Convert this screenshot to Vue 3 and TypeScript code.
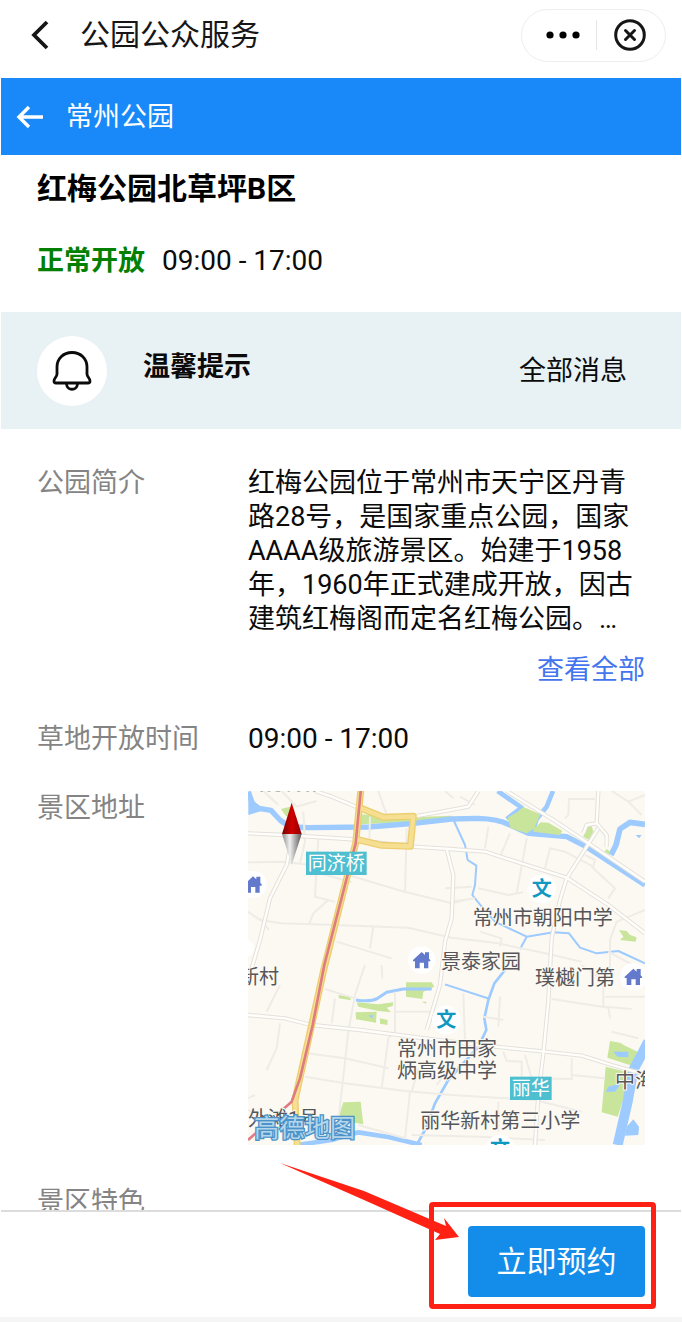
<script setup lang="ts">
interface Label { text: string; x: number; y: number }
interface Point { x: number; y: number }

const intro =
  '红梅公园位于常州市天宁区丹青路28号，是国家重点公园，国家AAAA级旅游景区。始建于1958年，1960年正式建成开放，因古建筑红梅阁而定名红梅公园。…'

const placeLabels: Label[] = [
  { text: '常州市朝阳中学', x: 683, y: 419 },
  { text: '景泰家园', x: 588, y: 552 },
  { text: '新村', x: -18, y: 597 },
  { text: '璞樾门第', x: 870, y: 599 },
  { text: '常州市田家', x: 456, y: 814 },
  { text: '炳高级中学', x: 456, y: 878 },
  { text: '丽华新村第三小学', x: 526, y: 1028 },
  { text: '中海', x: 1110, y: 910 },
  { text: '外滩1号', x: 9, y: 1024 },
]

const homes: Point[] = [
  { x: 24, y: 298 },
  { x: 530, y: 525 },
  { x: 1165, y: 575 },
]

const schools: Point[] = [
  { x: 890, y: 312 },
  { x: 604, y: 705 },
  { x: 765, y: 1092 },
]

const minorRoads: string[] = [
  'M55 18 L100 60 M110 18 L155 65 L215 48',
  'M9 232 L110 230 L180 238 L215 262 L320 292',
  'M175 80 L180 170 L165 235 M220 160 L210 335 L270 350 M250 345 L205 385 L192 418',
  'M310 270 L470 318 L620 355 L660 345 M485 130 L480 320 M400 18 L425 90 M375 95 L373 165',
  'M9 380 L45 405 L110 415 L270 420 L490 428 L620 458 L760 475 L900 505 L1010 530',
  'M45 400 L72 435 M385 425 L375 490 M275 470 L440 520',
  'M645 35 L690 60 M730 125 L720 190 M795 145 L765 215 M845 160 L815 325 M700 310 L790 330 L835 322',
  'M600 310 L680 305 M620 350 L690 340 M600 18 L625 40',
  'M900 250 L915 190 L960 200 L1045 245 L1050 225 L1020 210 M1040 245 L1110 310 L1090 340',
  'M970 90 L972 42 L1050 42 M970 90 L960 100 M1100 18 L1150 50 L1200 30 M1150 50 L1190 90',
  'M1200 375 L1115 410 L1095 465 L1095 550 L1075 595 L1075 665 L1160 672',
  'M705 440 L770 460 L765 485 M1090 500 L1200 560 M1080 635 L1200 635',
  'M920 642 L1090 668 L1095 700 M1010 540 L1080 590',
  'M360 540 L330 630 L310 740 L280 1010 M240 612 L330 640 M270 640 L260 715',
  'M105 600 L65 680 M105 715 L95 790 L65 855 M410 540 L412 580',
  'M450 620 L450 740 L430 760 L410 910 M450 680 L555 680',
  'M185 805 L300 820 L430 850 M180 875 L300 895 L480 918 L620 930 L870 945 L1010 980',
  'M495 920 L480 1060 M520 850 L500 920 M500 1050 L700 1055 L900 1065 M340 1020 L480 1060',
  'M655 625 L660 770 M765 635 L760 725 M715 695 L775 705',
  'M775 800 L785 828 L830 830 L830 875 M840 810 L860 880 L980 882 L980 820',
  'M980 870 L1080 880 M1100 740 L1180 760 M760 950 L760 1040',
  'M575 900 L590 880 M9 940 L30 930 M9 975 L60 995',
]

const majorRoads: string[] = [
  'M9 145 L120 150 L310 162 L500 185 L615 192 L720 200 L860 245 L965 278 L1090 360 L1200 445',
  'M210 18 L260 35 L345 70',
  'M140 160 L125 240 L75 340 L45 465 L20 550',
  'M505 95 L590 80 L670 65 L700 18',
  'M605 192 L625 270 L620 400 L600 470 L585 600 L545 735',
  'M785 18 L930 108 L1030 175 L1200 290',
  'M1060 18 L1055 115 L1085 150 L1085 185 M1055 115 L1025 120 L1015 145',
  'M1060 130 L1025 185 L965 280 L945 345 L920 460 L910 650 L895 805 L880 930 L870 1080',
  'M9 690 L120 700 L200 720 L345 735 L540 760 L700 780 L900 800 L1010 812 L1100 840 L1200 868',
]
</script>

<template>
  <main class="page">
    <header class="app-bar">
      <button class="icon-button back" type="button" aria-label="返回">
        <svg width="20" height="30" viewBox="0 0 20 30" aria-hidden="true">
          <path d="M18 2 L5 15 L18 28" fill="none" stroke="#161616" stroke-width="3.8" />
        </svg>
      </button>
      <span class="app-name">公园公众服务</span>
      <div class="capsule">
        <button class="icon-button more" type="button" aria-label="更多">
          <svg width="36" height="10" viewBox="0 0 36 10" aria-hidden="true">
            <circle cx="5" cy="5" r="3.6" /><circle cx="18" cy="5" r="3.6" /><circle cx="31" cy="5" r="3.6" />
          </svg>
        </button>
        <button class="icon-button close" type="button" aria-label="关闭">
          <svg width="34" height="34" viewBox="0 0 34 34" fill="none" stroke="#161616" aria-hidden="true">
            <circle cx="17" cy="17" r="14.3" stroke-width="3" />
            <path d="M12.5 12.5 L21.5 21.5 M21.5 12.5 L12.5 21.5" stroke-width="3" stroke-linecap="round" />
          </svg>
        </button>
      </div>
    </header>

    <nav class="nav-bar">
      <button class="icon-button" type="button" aria-label="返回上一页">
        <svg width="28" height="24" viewBox="0 0 28 24" fill="none" stroke="#fff" stroke-width="3.4" aria-hidden="true">
          <path d="M27 12 H3 M13 2 L3 12 L13 22" />
        </svg>
      </button>
      <span>常州公园</span>
    </nav>

    <div class="content">
      <section class="summary">
        <h1>红梅公园北草坪B区</h1>
        <p class="status"><strong>正常开放</strong><span class="hours">09:00 - 17:00</span></p>
      </section>

      <section class="notice">
        <span class="bell">
          <svg width="40" height="42" viewBox="0 0 40 42" fill="none" stroke="#0b0b0b" stroke-width="2.8" stroke-linejoin="round" aria-hidden="true">
            <path d="M20 2.5 C11 2.5 5 9 5 17 V24 C5 27 2 28 2 31 Q2 33 4 33 H36 Q38 33 38 31 C38 28 35 27 35 24 V17 C35 9 29 2.5 20 2.5 Z" />
            <path d="M14.5 34 C15 41 25 41 25.5 34" />
          </svg>
        </span>
        <h2>温馨提示</h2>
        <a href="#messages">全部消息</a>
      </section>

      <dl class="details">
        <div class="row">
          <dt>公园简介</dt>
          <dd>
            <p>{{ intro }}</p>
            <a class="view-all" href="#intro">查看全部</a>
          </dd>
        </div>
        <div class="row">
          <dt>草地开放时间</dt>
          <dd class="hours">09:00 - 17:00</dd>
        </div>
        <div class="row">
          <dt>景区地址</dt>
          <dd>
            <svg class="map" viewBox="9 18 1191 1062" role="img" aria-label="地图">
              <defs>
                <linearGradient id="needle-red">
                  <stop offset="0" stop-color="#740000" /><stop offset="0.5" stop-color="#d00000" /><stop offset="1" stop-color="#8e0000" />
                </linearGradient>
                <linearGradient id="needle-grey">
                  <stop offset="0" stop-color="#8c8c8c" /><stop offset="0.4" stop-color="#f0f0f0" /><stop offset="1" stop-color="#555" />
                </linearGradient>
              </defs>
              <rect x="9" y="18" width="1191" height="1062" fill="#fcf9f2" />

              <g fill="#c9e59b">
                <path d="M108 72 L135 65 L140 100 L122 92 Z" />
                <path d="M345 88 L495 97 L620 92 L620 105 L500 112 L345 118 Z" />
                <path d="M280 630 L315 636 L318 646 L282 640 Z M335 652 L400 658 L445 652 L443 663 L425 668 L438 682 L400 678 L340 665 Z" />
                <path d="M332 682 L395 680 L393 713 L333 703 Z M405 700 L428 705 L427 720 L405 716 Z" />
                <path d="M483 592 L560 592 L568 605 L535 620 L532 642 L483 635 Z M530 650 L545 650 L542 656 Z" />
                <path d="M295 952 L347 950 L355 1018 L300 1008 L280 995 Z" />
                <path d="M1122 435 L1145 438 L1155 450 L1175 457 L1172 470 L1125 465 L1135 455 Z" />
                <path d="M1095 768 L1125 773 L1140 782 L1178 800 L1170 845 L1087 818 Z" />
                <path d="M1082 845 L1160 865 L1118 995 L1070 982 Z" />
              </g>

              <g fill="none" stroke="#9dcaff" stroke-linejoin="round">
                <path stroke-width="16" d="M10 20 L22 55 L42 70 L78 76 L105 105 Q130 128 190 128 L370 126 L500 116 L620 102 L700 100 Q760 102 790 118 L850 145 L965 155 L1025 186 L1200 300" />
                <path stroke-width="14" d="M758 18 L830 68 L785 102 M924 18 L905 65 L875 102 L862 142" />
                <path stroke-width="17" d="M1200 118 L1155 112 L1125 132 L1113 180 L1098 210" />
                <path stroke-width="6" d="M627 108 L660 180 L668 225 L694 242 L690 300 L682 330 L710 365 L750 410 L845 455 L925 442 L972 445 L1005 488 L1055 505 L1120 498 L1200 535 M845 455 L825 493" />
                <path stroke-width="6" d="M600 598 L735 642" />
                <path stroke-width="9" d="M333 645 Q375 652 398 640 L425 622 L475 612 L560 612" />
                <path stroke-width="8" d="M780 555 L748 595 L730 645 L718 700 L724 735 L700 785 L610 885 L570 955 L540 1035 L515 1080" />
                <path stroke-width="30" d="M1210 770 L1165 855 L1148 950 L1118 1080" />
                <path stroke-width="14" d="M155 1080 L260 1065 L340 1042 L430 1056 L530 1080" />
              </g>
              <path fill="#9dcaff" d="M10 18 L35 60 L60 75 L10 90 Z M1105 800 L1150 800 L1150 817 L1118 815 Z M1082 920 L1090 905 L1128 895 L1110 920 Z M1145 1025 L1165 1003 L1182 1025 L1180 1050 L1140 1052 Z M370 692 L385 690 L382 700 Z M1172 150 L1190 150 L1182 160 Z" />
              <g fill="#c9e59b">
                <path d="M788 98 L818 80 L835 66 L886 88 L868 130 L845 145 L797 130 Z" />
                <path d="M865 132 L888 112 L910 113 L952 137 L945 150 L865 140 Z" />
                <path d="M1025 125 L1040 122 L1045 140 L1032 165 L1015 155 Z M1078 200 L1085 192 L1096 200 L1092 208 Z" />
              </g>

              <g fill="none" stroke="#efece7" stroke-width="6">
                <path v-for="d in minorRoads" :key="d" :d="d" />
              </g>
              <g fill="none" stroke="#e4e1dc" stroke-width="13" stroke-linejoin="round">
                <path v-for="d in majorRoads" :key="d" :d="d" />
              </g>
              <g fill="none" stroke="#fffefb" stroke-width="7" stroke-linejoin="round">
                <path v-for="d in majorRoads" :key="d" :d="d" />
              </g>

              <g fill="none" stroke-linejoin="round">
                <g stroke="#ecce70" stroke-width="21">
                  <path d="M345 68 L415 97 L505 94 L496 184 L410 181 L335 163" />
                  <path d="M348 10 L332 175 L300 300 L235 560 L200 720 L150 945 L157 1085" />
                </g>
                <g stroke="#f6df92" stroke-width="13">
                  <path d="M345 68 L415 97 L505 94 L496 184 L410 181 L335 163" />
                  <path d="M348 10 L332 175 L300 300 L235 560 L200 720 L150 945 L157 1085" />
                </g>
                <path stroke="#df7c81" stroke-width="8" d="M348 10 L332 175 L300 300 L238 540 L203 720 L165 880 L140 950 L9 1065" />
              </g>

              <path d="M46 18 h8 M68 18 h8 M92 18 h14 M128 18 h6 M156 18 h10 M184 18 h8 M204 18 h8" stroke="#a5a4a2" stroke-width="5" />

              <g v-for="home in homes" :key="home.x" :transform="`translate(${home.x} ${home.y})`">
                <circle r="41" fill="#fff" />
                <path fill="#6379cc" d="M-26 0 L0 -24 L10 -15 V-23 H22 V-4 L26 0 V4 H20 V25 H7 V8 H-6 V25 H-20 V4 H-26 Z" />
              </g>
              <circle cx="0" cy="490" r="27" fill="#fff" />
              <g v-for="school in schools" :key="school.x" :transform="`translate(${school.x} ${school.y})`">
                <circle r="43" fill="#fff" />
                <text class="school" y="22" text-anchor="middle">文</text>
              </g>

              <text v-for="label in placeLabels" :key="label.text" class="place" :x="label.x" :y="label.y">{{ label.text }}</text>

              <g class="station">
                <rect x="183" y="200" width="182" height="70" />
                <text x="274" y="255" text-anchor="middle">同济桥</text>
                <rect x="795" y="875" width="125" height="70" />
                <text x="857" y="930" text-anchor="middle">丽华</text>
              </g>

              <path d="M140 53 L170 147 H111 Z" fill="url(#needle-red)" />
              <path d="M111 147 H170 L140 240 Z" fill="url(#needle-grey)" />
              <text class="provider" x="27" y="1057">高德地图</text>
            </svg>
          </dd>
        </div>
        <div class="row">
          <dt>景区特色</dt>
          <dd></dd>
        </div>
      </dl>
    </div>

    <footer class="actions">
      <div class="reserve">
        <button type="button">立即预约</button>
        <span class="frame"></span>
        <svg class="pointer" width="180" height="80" viewBox="0 0 180 80" aria-hidden="true">
          <path d="M0 0 L84 28 L166 63 L164 55 L179 74 L155 77 L160 71 L84 37 Z" fill="#ff2114" />
        </svg>
      </div>
    </footer>
  </main>
</template>

<style>
body {
  margin: 0;
  background: #fff;
}
</style>

<style scoped>
.page {
  box-sizing: border-box;
  display: flex;
  flex-direction: column;
  height: 100vh;
  padding: 0 1px;
  border-bottom: 5px solid #f5f5f5;
  color: #0b0b0b;
  background: #fff;
  font: 27px/34px Roboto, "Noto Sans CJK SC", sans-serif;
}

h1, h2, p, dl, dd {
  margin: 0;
}

a {
  color: inherit;
  text-decoration: none;
}

button {
  padding: 0;
  border: 0;
  font: inherit;
}

.icon-button {
  display: flex;
  align-items: center;
  justify-content: center;
  background: none;
}

.app-bar {
  display: flex;
  align-items: center;
  flex: none;
  box-sizing: border-box;
  height: 78px;
  padding: 0 15px 8px 28px;
  color: #161616;
}

.app-name {
  flex: 1;
  padding-left: 31px;
  font-size: 30px;
}

.capsule {
  display: flex;
  align-items: center;
  box-sizing: border-box;
  width: 145px;
  height: 53px;
  border: 1px solid #ededed;
  border-radius: 27px;
}

.capsule .icon-button {
  flex: 1;
  height: 30px;
}

.capsule .more {
  padding-left: 8px;
  border-right: 1px solid #e6e6e6;
}

.capsule .close {
  padding-right: 2px;
}

.nav-bar {
  display: flex;
  align-items: center;
  flex: none;
  gap: 22px;
  height: 77px;
  padding-left: 15px;
  color: #fff;
  background: #1989fa;
}

.content {
  flex: 1;
  min-height: 0;
  overflow-y: auto;
  scrollbar-width: none;
}

.summary {
  padding: 12px 36px 34px;
}

h1 {
  margin-bottom: 33px;
  color: #000;
  font-size: 30px;
  line-height: 44px;
}

.status {
  display: flex;
  gap: 17px;
}

.status strong {
  color: #028002;
}

.hours {
  font-size: 28px;
}

.notice {
  display: flex;
  align-items: center;
  padding: 24px 54px 23px 36px;
  background: #e8f1f4;
}

.bell {
  display: flex;
  align-items: center;
  justify-content: center;
  width: 70px;
  height: 70px;
  border-radius: 50%;
  background: #fff;
}

h2 {
  flex: 1;
  padding: 0 0 8px 36px;
  font-size: 27px;
  line-height: 34px;
}

.details {
  display: flex;
  flex-direction: column;
  gap: 35px;
  padding: 37px 36px 35px;
}

.row {
  display: grid;
  grid-template-columns: 211px 1fr;
}

dt {
  color: #848484;
}

.view-all {
  display: block;
  margin-top: 17px;
  color: #4474ee;
  text-align: right;
}

.map {
  display: block;
  width: 100%;
  margin-bottom: 5px;
}

.place {
  fill: #55565a;
  stroke: #fcf9f2;
  stroke-width: 6px;
  paint-order: stroke;
  font-size: 60px;
}

.school {
  fill: #1098c2;
  font-size: 60px;
  font-weight: 700;
}

.station rect {
  fill: #4ebfd0;
}

.station text {
  fill: #fff;
  font-size: 57px;
}

.provider {
  fill: #b5d5ea;
  stroke: #4b93c9;
  stroke-width: 8px;
  paint-order: stroke;
  font-size: 76px;
}

.actions {
  display: flex;
  justify-content: flex-end;
  flex: none;
  padding: 14px 36px 20px;
  border-top: 2px solid #dcdcdc;
  background: #fff;
}

.reserve {
  position: relative;
}

.reserve button {
  width: 177px;
  height: 71px;
  border-radius: 4px;
  color: #fff;
  background: #148dea;
  font-size: 30px;
}

.frame {
  position: absolute;
  inset: -24px -11px -12px -39px;
  border: 5px solid #ff2114;
  border-radius: 4px;
  pointer-events: none;
}

.pointer {
  position: absolute;
  top: -63px;
  right: 185px;
  pointer-events: none;
}
</style>
